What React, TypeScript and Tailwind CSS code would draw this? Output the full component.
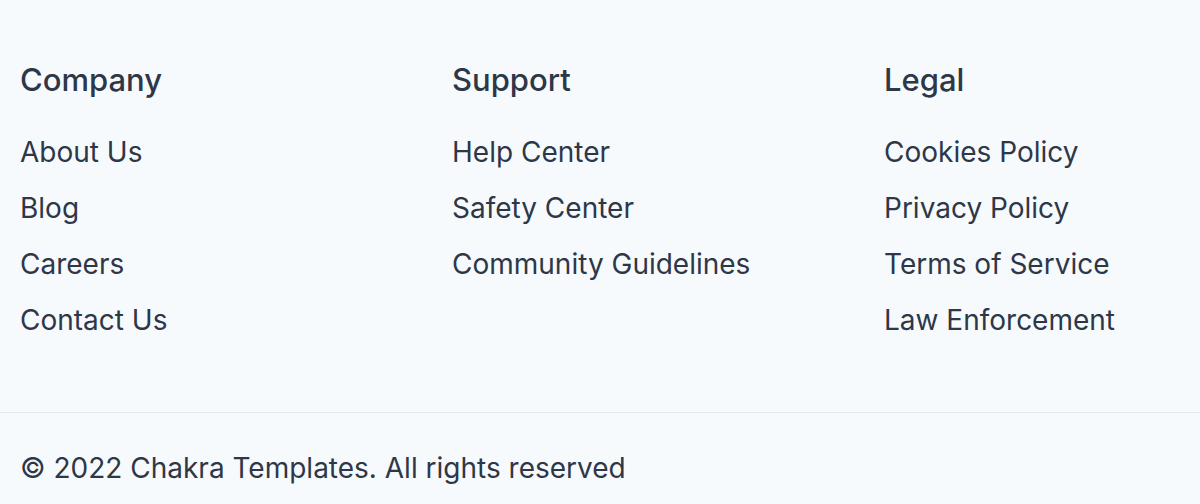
const columns = [
  {
    title: "Company",
    links: ["About Us", "Blog", "Careers", "Contact Us"],
  },
  {
    title: "Support",
    links: ["Help Center", "Safety Center", "Community Guidelines"],
  },
  {
    title: "Legal",
    links: ["Cookies Policy", "Privacy Policy", "Terms of Service", "Law Enforcement"],
  },
];

export default function App() {
  return (
    <footer
      className="h-[504px] overflow-hidden bg-[#f7fafc] text-[#2d3748]"
      style={{ fontFamily: "Inter, 'Noto Sans', sans-serif" }}
    >
      <div className="grid grid-cols-[432px_432px_1fr] px-5 pt-[60px] pb-[74px]">
        {columns.map((col) => (
          <div key={col.title} className="flex flex-col">
            <h3 className="mb-[34px] text-[31px] leading-[40px] font-medium">{col.title}</h3>
            <ul className="flex flex-col gap-[20px]">
              {col.links.map((l) => (
                <li key={l}>
                  <a href="#" className="text-[28px] leading-[36px]">
                    {l}
                  </a>
                </li>
              ))}
            </ul>
          </div>
        ))}
      </div>
      <div className="border-t border-[#e2e8f0] px-5 pt-[35px] pb-4">
        <p className="text-[28px] leading-[40px]">© 2022 Chakra Templates. All rights reserved</p>
      </div>
    </footer>
  );
}
